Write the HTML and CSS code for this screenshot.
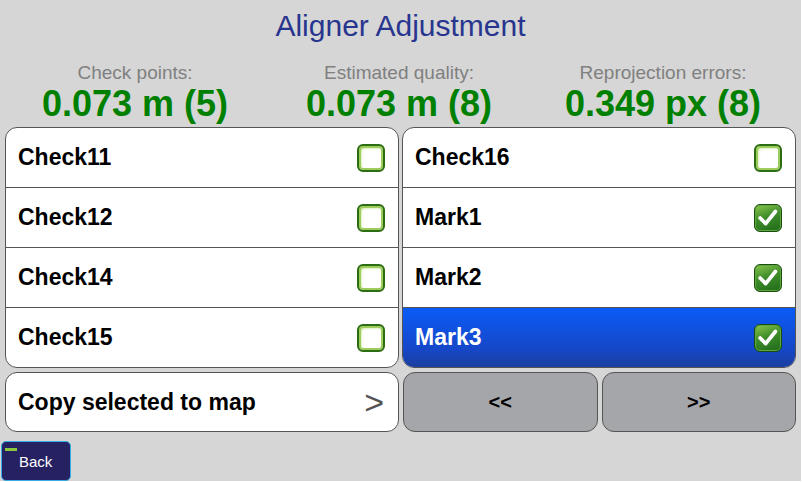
FILE: index.html
```html
<!DOCTYPE html>
<html lang="en">
<head>
    <meta charset="UTF-8">
    <meta name="viewport" content="width=device-width, initial-scale=1.0">
    <title>Aligner Adjustment</title>
    <link rel="stylesheet" href="styles.css">
</head>
<body>
    <div class="screen">
        <h1 class="title">Aligner Adjustment</h1>

        <div class="stats">
            <div class="stat">
                <div class="stat-label">Check points:</div>
                <div class="stat-value">0.073 m (5)</div>
            </div>
            <div class="stat">
                <div class="stat-label">Estimated quality:</div>
                <div class="stat-value">0.073 m (8)</div>
            </div>
            <div class="stat">
                <div class="stat-label">Reprojection errors:</div>
                <div class="stat-value">0.349 px (8)</div>
            </div>
        </div>

        <div class="lists">
            <ul class="list">
                <li class="row"><span>Check11</span><span class="check"></span></li>
                <li class="row"><span>Check12</span><span class="check"></span></li>
                <li class="row"><span>Check14</span><span class="check"></span></li>
                <li class="row"><span>Check15</span><span class="check"></span></li>
            </ul>
            <ul class="list">
                <li class="row"><span>Check16</span><span class="check"></span></li>
                <li class="row"><span>Mark1</span><span class="check checked"><svg viewBox="0 0 28 28"><path d="M5.5 14 L11.5 20 L22 7" /></svg></span></li>
                <li class="row"><span>Mark2</span><span class="check checked"><svg viewBox="0 0 28 28"><path d="M5.5 14 L11.5 20 L22 7" /></svg></span></li>
                <li class="row selected"><span>Mark3</span><span class="check checked"><svg viewBox="0 0 28 28"><path d="M5.5 14 L11.5 20 L22 7" /></svg></span></li>
            </ul>
        </div>

        <div class="actions">
            <button class="btn btn-copy"><span>Copy selected to map</span><span class="arrow">&gt;</span></button>
            <div class="pager">
                <button class="btn btn-gray">&lt;&lt;</button>
                <button class="btn btn-gray">&gt;&gt;</button>
            </div>
        </div>

        <button class="back"><span class="back-mark"></span>Back</button>
    </div>
</body>
</html>
```

FILE: styles.css
```css
body {
    margin: 0;
    background-color: #fff;
    font-family: "Liberation Sans", Arial, sans-serif;
}
.screen {
    width: 801px;
    height: 481px;
    background-color: #d6d6d6;
    display: flex;
    flex-direction: column;
}
.title {
    margin: 0;
    height: 52px;
    padding-top: 9px;
    box-sizing: border-box;
    font-size: 30px;
    line-height: 34px;
    font-weight: normal;
    color: #28358f;
    text-align: center;
}
.stats {
    display: grid;
    grid-template-columns: repeat(3, 264px);
    padding-left: 3px;
    height: 75px;
}
.stat {
    text-align: center;
}
.stat-label {
    font-size: 19px;
    line-height: 22px;
    color: #808080;
    padding-top: 10px;
}
.stat-value {
    margin-top: 1px;
    font-size: 36px;
    line-height: 38px;
    font-weight: bold;
    color: #008000;
}
.lists {
    display: grid;
    grid-template-columns: 1fr 1fr;
    gap: 3px;
    padding: 0 5px;
}
.list {
    list-style: none;
    margin: 0;
    padding: 0;
    background-color: #fff;
    border: 1px solid #555;
    border-radius: 12px;
    overflow: hidden;
}
.row {
    height: 59px;
    display: flex;
    align-items: center;
    justify-content: space-between;
    padding: 0 13px 0 12px;
    font-size: 23px;
    font-weight: bold;
    color: #000;
    border-top: 1px solid #555;
}
.row:first-child {
    border-top: none;
}
.row.selected {
    background: linear-gradient(#0a5cf6, #1547c8 70%, #1b3f9e);
    color: #fff;
}
.check {
    width: 28px;
    height: 28px;
    box-sizing: border-box;
    border: 2px solid #2c6c12;
    border-radius: 6px;
    background-color: #fff;
    box-shadow: inset 0 0 0 2px #9ccd5c, inset 2px 2px 3px #b8e07c;
}
.check.checked {
    border: 1px solid #1b4d12;
    background: linear-gradient(160deg, #8cc64e, #3f8d2a 45%, #1e6a1a);
    box-shadow: inset 0 0 0 1px #5da83a;
}
.check svg {
    display: block;
    width: 26px;
    height: 26px;
}
.check path {
    fill: none;
    stroke: #fff;
    stroke-width: 4;
    stroke-linecap: round;
    stroke-linejoin: round;
}
.actions {
    display: grid;
    grid-template-columns: 1fr 1fr;
    gap: 3px;
    padding: 4px 5px 0;
}
.btn {
    height: 60px;
    border: 1px solid #555;
    border-radius: 12px;
    font-family: "Liberation Sans", Arial, sans-serif;
    font-weight: bold;
    color: #000;
    margin: 0;
}
.btn-copy {
    background-color: #fff;
    display: flex;
    align-items: center;
    justify-content: space-between;
    padding: 0 14px 0 12px;
    font-size: 23px;
    text-align: left;
}
.arrow {
    font-weight: normal;
    font-size: 34px;
    line-height: 34px;
    color: #555;
}
.pager {
    display: grid;
    grid-template-columns: 1fr 1fr;
    gap: 4px;
    padding-left: 1px;
}
.btn-gray {
    background-color: #a5a6a9;
    font-size: 20px;
}
.back {
    margin: 9px 0 0 1px;
    width: 70px;
    height: 40px;
    background-color: #262262;
    border: 1px solid #3aa9e8;
    border-radius: 5px;
    color: #fff;
    font-family: "Liberation Sans", Arial, sans-serif;
    font-size: 15px;
    padding: 0 0 0 17px;
    text-align: left;
    position: relative;
}
.back-mark {
    position: absolute;
    left: 3px;
    top: 6px;
    width: 12px;
    height: 3px;
    background-color: #8cc63f;
}
```
